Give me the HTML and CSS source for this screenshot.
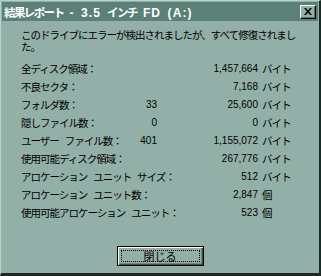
FILE: index.html
```html
<!DOCTYPE html>
<html lang="ja">
<head>
<meta charset="utf-8">
<link rel="stylesheet" href="styles.css">
</head>
<body>
<div class="window">
  <div class="titlebar">
    <span class="title">結果レポート <span class="lat">- 3.5</span> インチ <span class="lat">FD (A:)</span></span>
    <span class="closebtn"><svg width="8" height="7" viewBox="0 0 8 7"><path d="M0 0h2l2 2.5L6 0h2L5 3.5 8 7H6L4 4.5 2 7H0l3-3.5z" fill="#000"/></svg></span>
  </div>
  <div class="content">
    <p class="msg">このドライブにエラーが検出されましたが、すべて修復されました。</p>
    <div class="stats">
      <span class="lbl">全ディスク領域：</span><span class="c2"></span><span class="num">1,457,664</span><span class="unit">バイト</span>
      <span class="lbl">不良セクタ：</span><span class="c2"></span><span class="num">7,168</span><span class="unit">バイト</span>
      <span class="lbl">フォルダ数：</span><span class="c2">33</span><span class="num">25,600</span><span class="unit">バイト</span>
      <span class="lbl">隠しファイル数：</span><span class="c2">0</span><span class="num">0</span><span class="unit">バイト</span>
      <span class="lbl">ユーザー ファイル数：</span><span class="c2">401</span><span class="num">1,155,072</span><span class="unit">バイト</span>
      <span class="lbl">使用可能ディスク領域：</span><span class="c2"></span><span class="num">267,776</span><span class="unit">バイト</span>
      <span class="lbl">アロケーション ユニット サイズ：</span><span class="c2"></span><span class="num">512</span><span class="unit">バイト</span>
      <span class="lbl">アロケーション ユニット数：</span><span class="c2"></span><span class="num">2,847</span><span class="unit">個</span>
      <span class="lbl">使用可能アロケーション ユニット：</span><span class="c2"></span><span class="num">523</span><span class="unit">個</span>
    </div>
    <div class="btnrow">
      <button class="btn"><span class="focus">閉じる</span></button>
    </div>
  </div>
</div>
</body>
</html>
```
FILE: styles.css
```css
html, body {
  margin: 0;
  padding: 0;
  background: #92b0a8;
}
.window {
  width: 321px;
  height: 276px;
  box-sizing: border-box;
  background: #92b0a8;
  border-left: 1px solid #b8d0c8;
  border-top: 1px solid #b8d0c8;
  border-right: 2px solid #1c2824;
  border-bottom: 3px solid #1c2824;
  padding: 1px 0 0 1px;
  font-family: "Liberation Sans", "Noto Sans CJK JP", sans-serif;
  font-size: 10.5px;
  color: #000;
}
.titlebar {
  height: 19px;
  margin-right: 1px;
  background: #5a8078;
  display: flex;
  align-items: center;
  justify-content: space-between;
  padding: 0 2px 0 2px;
}
.title {
  color: #fff;
  font-weight: bold;
  font-size: 11.5px;
  letter-spacing: -1.6px;
  word-spacing: 4.5px;
  white-space: pre;
}
.title .lat {
  letter-spacing: 1.1px;
  word-spacing: 2px;
  font-size: 12px;
}
.closebtn {
  width: 16px;
  height: 14px;
  box-sizing: border-box;
  background: #92b0a8;
  border-top: 1px solid #fff;
  border-left: 1px solid #fff;
  border-right: 1px solid #000;
  border-bottom: 1px solid #000;
  box-shadow: inset -1px -1px 0 #5a7068;
  display: flex;
  align-items: center;
  justify-content: center;
}
.content {
  padding: 8px 0 0 19px;
}
.msg {
  margin: 0;
  width: 285px;
  line-height: 12px;
  letter-spacing: -1px;
}
.stats {
  margin-top: 6px;
  display: grid;
  grid-template-columns: 118px 18px 101px auto;
  grid-auto-rows: 18.1px;
  align-items: center;
  white-space: nowrap;
}
.lbl, .unit {
  letter-spacing: -1px;
}
.lbl {
  word-spacing: 4px;
}
.c2, .num {
  text-align: right;
  font-size: 10px;
}
.unit {
  padding-left: 4px;
}
.btnrow {
  display: flex;
  justify-content: center;
  margin-top: 24px;
  padding-right: 20px;
}
.btn {
  width: 87px;
  height: 20px;
  box-sizing: border-box;
  background: #92b0a8;
  border: 1px solid #000;
  box-shadow: inset 1px 1px 0 #fff, inset -1px -1px 0 #3c5048, inset -2px -2px 0 #6a8880;
  padding: 3px;
  font-family: inherit;
  font-size: 11px;
  display: flex;
}
.focus {
  flex: 1;
  border: 1px dotted #000;
  display: flex;
  align-items: center;
  justify-content: center;
}
```
